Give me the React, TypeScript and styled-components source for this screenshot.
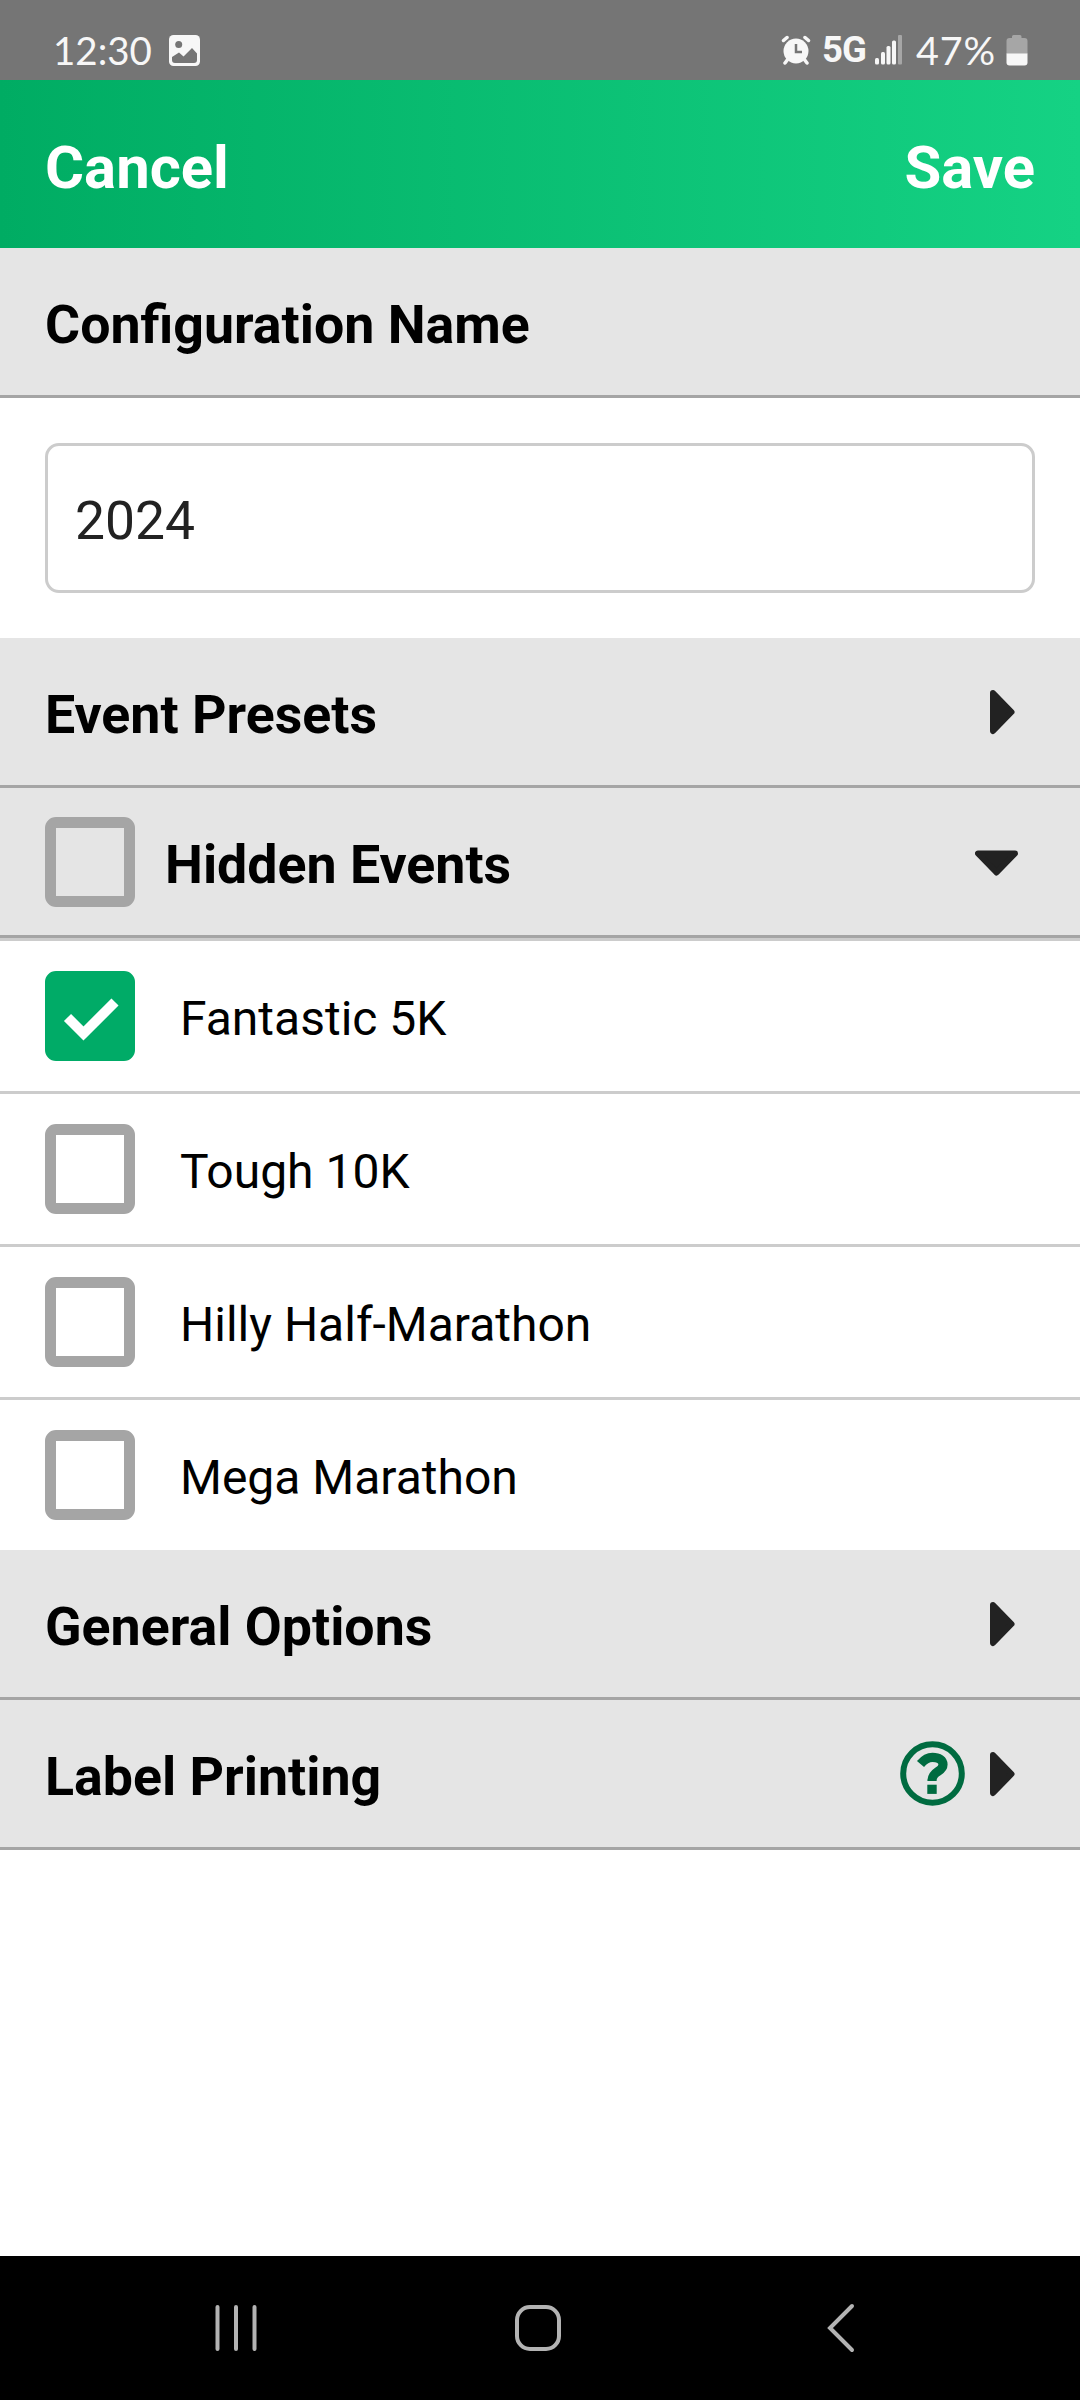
import React, { useState } from "react";
import styled, { createGlobalStyle } from "styled-components";

const GlobalStyle = createGlobalStyle`
  *, *::before, *::after { box-sizing: border-box; }
  body { margin: 0; background: #fff; }
  button, input { font: inherit; color: inherit; border: 0; padding: 0; background: none; }
`;

const Screen = styled.div`
  display: flex;
  flex-direction: column;
  width: 1080px;
  height: 2400px;
  background: #fff;
  color: #000;
  font-family: Roboto, "Liberation Sans", sans-serif;
`;

const StatusBar = styled.div`
  display: flex;
  justify-content: space-between;
  height: 80px;
  padding: 20px 52px 0 53px;
  background: #757575;
  color: #f7f7f7;
`;

const StatusGroup = styled.div`
  display: flex;
  align-items: center;
  height: 60px;
`;

const Clock = styled.span`
  font: 400 38.5px/60px Lato, "Liberation Sans", sans-serif;
  margin-right: 17px;
`;

const BatteryLevel = styled.span`
  width: 84px;
  margin: 0 6px 0 13px;
  font: 400 39.5px/60px Lato, "Liberation Sans", sans-serif;
  letter-spacing: 0.8px;
  white-space: nowrap;
`;

const NetworkType = styled.span`
  width: 45px;
  margin: 0 8px 0 11px;
  font-size: 36.5px;
  line-height: 60px;
  font-weight: 700;
  letter-spacing: -1px;
`;

const Glyph = styled.svg`
  display: block;
  flex: none;
`;

const Header = styled.header`
  display: flex;
  justify-content: space-between;
  align-items: center;
  height: 168px;
  padding: 8px 45px 0;
  background: linear-gradient(90deg, #00ac63, #15d284);
`;

const HeaderButton = styled.button`
  color: #fff;
  font-size: 59.8px;
  line-height: 70px;
  font-weight: 700;
`;

const Section = styled.div`
  display: flex;
  align-items: center;
  height: 150px;
  padding: 0 45px;
  gap: 30px;
  background: #e5e5e5;
  border-bottom: 3px solid #a5a5a5;
`;

const SectionTitle = styled.h2`
  flex: 1;
  margin: 0;
  padding-top: 6px;
  font-size: 53.7px;
  line-height: 64px;
  font-weight: 700;
`;

const SectionActions = styled.div`
  display: flex;
  align-items: center;
  gap: 10px;
`;

const NameField = styled.div`
  height: 240px;
  padding: 45px;
`;

const NameInput = styled.input`
  display: block;
  width: 100%;
  height: 150px;
  padding: 4px 27px 0;
  border: 3px solid #ccc;
  border-radius: 14px;
  color: #222;
  font-size: 53.4px;
  outline: none;
`;

const EventList = styled.div`
  border-top: 3px solid #ccc;
`;

const EventRow = styled.label`
  display: flex;
  align-items: center;
  height: 153px;
  padding: 0 45px;
  gap: 45px;
  border-bottom: 3px solid #ccc;
  &:last-child { height: 150px; border-bottom: 0; }
`;

const EventName = styled.span`
  padding-top: 5px;
  font-size: 48px;
  line-height: 58px;
`;

const CheckBox = styled.button<{ $on?: boolean }>`
  display: block;
  flex: none;
  width: 90px;
  height: 90px;
  border: 11px solid ${(p) => (p.$on ? "#00ab67" : "#a5a5a5")};
  border-radius: 11px;
  background: ${(p) => (p.$on ? "#00ab67" : "transparent")};
`;

const Spacer = styled.div`
  flex: 1;
`;

const NavBar = styled.nav`
  display: flex;
  justify-content: space-between;
  align-items: center;
  height: 144px;
  padding: 0 223px 0 213px;
  background: #000;
`;

const CaretRight = () => (
  <Glyph width="60" height="60" viewBox="0 0 60 60">
    <path d="M18 11 36.5 30 18 49Z" fill="#222" stroke="#222" strokeWidth="6" strokeLinejoin="round" />
  </Glyph>
);

const CaretDown = () => (
  <Glyph width="60" height="60" viewBox="0 0 60 60">
    <path d="M3 21.5H40L21.5 40.5Z" fill="#222" stroke="#222" strokeWidth="6" strokeLinejoin="round" />
  </Glyph>
);

const HelpIcon = () => (
  <Glyph width="65" height="65" viewBox="0 0 65 65">
    <circle cx="32.5" cy="32.5" r="29.3" fill="none" stroke="#006b40" strokeWidth="6" />
    <path
      d="M20.5 23C24 18.800 28 16.300 32.500 16.300C39 16.300 43 19 43 23.500C43 31.500 32 29.500 32 40"
      fill="none"
      stroke="#006b40"
      strokeWidth="9.2"
    />
    <rect x="27.300" y="43.700" width="9.400" height="9.200" fill="#006b40" />
  </Glyph>
);

const CheckMark = () => (
  <Glyph width="68" height="68" viewBox="0 0 68 68">
    <path d="M11.500 35.500 27.500 51.500 59 20" fill="none" stroke="#fff" strokeWidth="10" />
  </Glyph>
);

const PictureIcon = () => (
  <Glyph width="31" height="31" viewBox="0 0 31 31">
    <rect width="31" height="31" rx="4.500" fill="#f7f7f7" />
    <circle cx="9.700" cy="9.500" r="3.500" fill="#757575" />
    <path d="M3 22 10 17.500 14.500 21.500 23 13 28 18.500V25Q28 28 25 28H6Q3 28 3 25Z" fill="#757575" />
  </Glyph>
);

const AlarmIcon = () => (
  <Glyph width="30" height="30" viewBox="0 0 30 30">
    <g stroke="#f7f7f7" strokeWidth="3.500" strokeLinecap="round">
      <path d="M2.500 5.500 6 2.500M27.500 5.500 24 2.500M7 24 4 28M23 24 26 28" />
    </g>
    <circle cx="15" cy="16" r="12.500" fill="#f7f7f7" />
    <path d="M15 9V17H21" fill="none" stroke="#757575" strokeWidth="2.500" />
  </Glyph>
);

const SignalIcon = () => (
  <Glyph width="28" height="30" viewBox="0 0 28 30">
    <g fill="#f7f7f7">
      <rect x="0" y="23" width="4" height="6.500" rx="1.500" />
      <rect x="6" y="17" width="4" height="12.500" rx="1.500" />
      <rect x="11.500" y="11" width="4" height="18.500" rx="1.500" />
      <rect x="17" y="5.500" width="4" height="24" rx="1.500" />
    </g>
    <rect x="23" y="0" width="4" height="29.500" rx="1" fill="#a6a6a6" />
  </Glyph>
);

const BatteryIcon = () => (
  <Glyph width="22" height="31" viewBox="0 0 22 31">
    <path d="M6 3V1.500Q6 0 7.500 0H14Q15.500 0 15.500 1.500V3H18.500Q21.500 3 21.500 6V19H.5V6Q.5 3 3.500 3Z" fill="#a6a6a6" />
    <path d="M.5 18.500H21.500V27.500Q21.500 30.500 18.500 30.500H3.500Q.5 30.500 .5 27.500Z" fill="#f7f7f7" />
  </Glyph>
);

const EVENTS = ["Fantastic 5K", "Tough 10K", "Hilly Half-Marathon", "Mega Marathon"];

export default function App() {
  const [name, setName] = useState("2024");
  const [hidden, setHidden] = useState<string[]>(["Fantastic 5K"]);
  const toggle = (e: string) =>
    setHidden((h) => (h.includes(e) ? h.filter((x) => x !== e) : [...h, e]));

  return (
    <Screen>
      <GlobalStyle />
      <StatusBar>
        <StatusGroup>
          <Clock>12:30</Clock>
          <PictureIcon />
        </StatusGroup>
        <StatusGroup>
          <AlarmIcon />
          <NetworkType>5G</NetworkType>
          <SignalIcon />
          <BatteryLevel>47%</BatteryLevel>
          <BatteryIcon />
        </StatusGroup>
      </StatusBar>
      <Header>
        <HeaderButton>Cancel</HeaderButton>
        <HeaderButton>Save</HeaderButton>
      </Header>
      <Section>
        <SectionTitle>Configuration Name</SectionTitle>
      </Section>
      <NameField>
        <NameInput value={name} onChange={(e) => setName(e.target.value)} />
      </NameField>
      <Section>
        <SectionTitle>Event Presets</SectionTitle>
        <CaretRight />
      </Section>
      <Section>
        <CheckBox aria-label="Hide all events" />
        <SectionTitle>Hidden Events</SectionTitle>
        <CaretDown />
      </Section>
      <EventList>
        {EVENTS.map((e) => (
          <EventRow key={e}>
            <CheckBox $on={hidden.includes(e)} onClick={() => toggle(e)}>
              {hidden.includes(e) && <CheckMark />}
            </CheckBox>
            <EventName>{e}</EventName>
          </EventRow>
        ))}
      </EventList>
      <Section>
        <SectionTitle>General Options</SectionTitle>
        <CaretRight />
      </Section>
      <Section>
        <SectionTitle>Label Printing</SectionTitle>
        <SectionActions>
          <HelpIcon />
          <CaretRight />
        </SectionActions>
      </Section>
      <Spacer />
      <NavBar>
        <Glyph width="46" height="50" viewBox="0 0 46 50" stroke="#b3b3b3" strokeWidth="4" strokeLinecap="round">
          <path d="M4.500 4V46M23 4V46M41.500 4V46" />
        </Glyph>
        <Glyph width="56" height="50" viewBox="0 0 56 50">
          <rect x="3" y="4" width="42" height="42" rx="13" fill="none" stroke="#b3b3b3" strokeWidth="4" />
        </Glyph>
        <Glyph width="32" height="50" viewBox="0 0 32 50">
          <path d="M27 3 5 25 27 47" fill="none" stroke="#b3b3b3" strokeWidth="4" strokeLinecap="round" />
        </Glyph>
      </NavBar>
    </Screen>
  );
}
